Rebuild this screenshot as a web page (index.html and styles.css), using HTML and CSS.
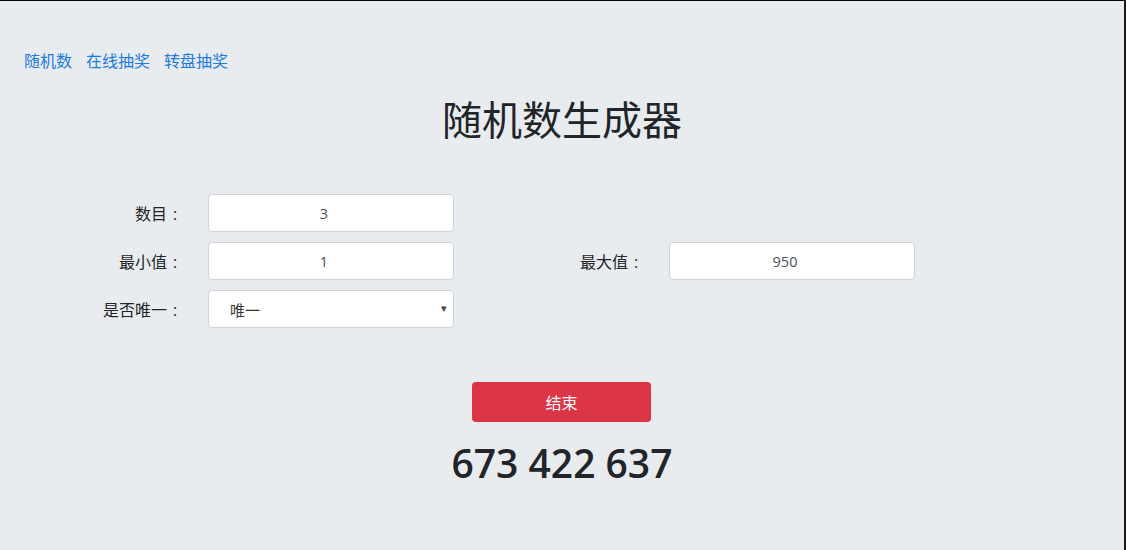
FILE: index.html
```html
<!DOCTYPE html>
<html lang="zh-CN">
<head>
<meta charset="utf-8">
<title>随机数生成器</title>
<link rel="stylesheet" href="styles.css">
</head>
<body>
<div class="page">
  <nav class="nav">
    <a href="#">随机数</a>
    <a href="#">在线抽奖</a>
    <a href="#">转盘抽奖</a>
  </nav>
  <h1 class="title">随机数生成器</h1>
  <form class="form">
    <label class="label">数目<span class="colon">:</span></label>
    <input class="field" type="text" value="3">
    <span></span><span></span>
    <label class="label">最小值<span class="colon">:</span></label>
    <input class="field" type="text" value="1">
    <label class="label">最大值<span class="colon">:</span></label>
    <input class="field" type="text" value="950">
    <label class="label">是否唯一<span class="colon">:</span></label>
    <div class="select-wrap">
      <select class="select"><option>唯一</option><option>不唯一</option></select>
      <span class="caret">▾</span>
    </div>
  </form>
  <div class="actions">
    <button class="btn" type="button">结束</button>
  </div>
  <div class="result">673 422 637</div>
</div>
</body>
</html>
```
FILE: styles.css
```css
html, body {
  margin: 0;
  padding: 0;
}
body {
  font-family: "Open Sans", "Noto Sans CJK SC", sans-serif;
  color: #212529;
  background: #e9ecef;
}
.page {
  box-sizing: border-box;
  height: 550px;
  border-top: 1px solid #000;
  border-right: 2px solid #1a1a1a;
  background: #e9ecef;
  padding-top: 47px;
}
.nav {
  padding-left: 24px;
  display: flex;
  gap: 14px;
  font-size: 16px;
  line-height: 24px;
  font-family: "Noto Sans CJK SC", sans-serif;
}
.nav a {
  color: #1a7ae6;
  text-decoration: none;
}
.title {
  margin: 22px 0 0;
  text-align: center;
  font-family: "Noto Sans CJK SC", sans-serif;
  font-weight: 400;
  font-size: 40px;
  line-height: 48px;
  color: #212529;
}
.form {
  margin: 52px 0 0 24px;
  display: grid;
  grid-template-columns: 160px 246px 167px 246px;
  grid-auto-rows: 38px;
  column-gap: 24px;
  row-gap: 10px;
}
.label {
  align-self: center;
  text-align: right;
  padding-right: 1px;
  font-family: "Noto Sans CJK SC", sans-serif;
  font-size: 16px;
  line-height: 24px;
  color: #212529;
}
.colon {
  display: inline-block;
  width: 16px;
  text-align: center;
  font-family: "Open Sans", sans-serif;
  font-weight: 400;
}
.field, .select {
  box-sizing: border-box;
  width: 246px;
  height: 38px;
  border: 1px solid #ced4da;
  border-radius: 4px;
  background: #fff;
  font-family: "Open Sans", "Noto Sans CJK SC", sans-serif;
  font-size: 14.5px;
  color: #495057;
  outline: none;
}
.field {
  text-align: center;
  padding: 0 26px 0 12px;
}
.select-wrap {
  position: relative;
  width: 246px;
  height: 38px;
}
.select {
  appearance: none;
  -webkit-appearance: none;
  padding: 0 24px 0 21px;
  font-family: "Noto Sans CJK SC", sans-serif;
  font-size: 15px;
  color: #333;
}
.caret {
  position: absolute;
  right: 7px;
  top: 10px;
  font-size: 11px;
  line-height: 16px;
  color: #444;
  pointer-events: none;
}
.actions {
  margin-top: 54px;
  display: flex;
  justify-content: center;
}
.btn {
  width: 179px;
  height: 40px;
  border: none;
  border-radius: 4px;
  background: #dc3545;
  color: #fff;
  font-family: "Noto Sans CJK SC", sans-serif;
  font-size: 16px;
  margin-left: -1px;
}
.result {
  margin-top: 17px;
  text-align: center;
  font-family: "Open Sans", sans-serif;
  font-weight: 600;
  font-size: 39px;
  line-height: 48px;
  color: #212529;
}
```
